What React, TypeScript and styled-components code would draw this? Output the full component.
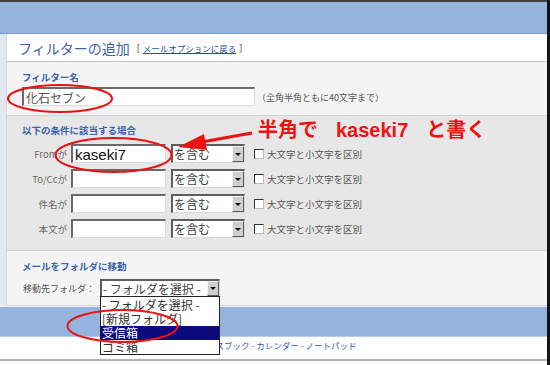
import { Fragment } from "react";
import styled, { createGlobalStyle } from "styled-components";

const GlobalStyle = createGlobalStyle`
  html, body {
    margin: 0;
    padding: 0;
    background: #ffffff;
  }
  body {
    font-family: "Noto Sans CJK JP", "Noto Sans", sans-serif;
  }
`;

const JP = `"Noto Sans CJK JP", "Noto Sans", sans-serif`;

const Page = styled.div`
  position: relative;
  width: 547px;
  height: 365px;
  overflow: hidden;
  border-right: 3px solid #141414;
  display: flex;
  flex-direction: column;
  background: #ffffff;
  font-family: ${JP};
`;

const Band = styled.div<{ $top?: boolean }>`
  flex: none;
  height: ${(p) => (p.$top ? "31px" : "29px")};
  background: #95b3df;
  border-top: ${(p) => (p.$top ? "2px solid #3e3e3e" : "1px solid #f4eeee")};
  border-bottom: 1px solid ${(p) => (p.$top ? "#7898cf" : "#b9cbe8")};
`;

const Body = styled.div`
  flex: none;
  display: flex;
  height: 272px;
`;

const SideStrip = styled.div`
  width: 6px;
  background: #e3e7ee;
  border-right: 1px solid #d5dae2;
`;

const Content = styled.div`
  flex: 1;
  display: flex;
  flex-direction: column;
`;

const TitleBar = styled.div`
  height: 27px;
  display: flex;
  align-items: center;
  gap: 7px;
  padding-left: 11px;
  background: #ffffff;
  border-bottom: 1px solid #c9c9c9;
`;

const Title = styled.h1`
  margin: 0;
  font-size: 14px;
  font-weight: 400;
  color: #3d63ae;
`;

const Bracket = styled.span`
  font-size: 9px;
  color: #333;
  display: flex;
  gap: 3px;
  align-items: center;
`;

const BackLink = styled.a`
  color: #2a4aa8;
  text-decoration: underline;
  font-size: 8.5px;
`;

const Section = styled.div<{ $tone: "light" | "dark"; $h: number }>`
  height: ${(p) => p.$h}px;
  box-sizing: border-box;
  padding: ${(p) => (p.$tone === "dark" ? "9px 0 0 15px" : "10px 0 0 15px")};
  background: ${(p) => (p.$tone === "dark" ? "#e7e7e7" : "#f4f4f4")};
  border-bottom: 1px solid #d2d2d2;
  display: flex;
  flex-direction: column;
  position: relative;
`;

const SectionLabel = styled.div<{ $gap: number }>`
  font-size: 9.5px;
  line-height: 10px;
  font-weight: 700;
  color: #3b63ae;
  margin-bottom: ${(p) => p.$gap}px;
`;

const NameRow = styled.div`
  display: flex;
  align-items: flex-end;
  gap: 2px;
`;

const Hint = styled.span`
  font-size: 9px;
  color: #555;
  padding-bottom: 2px;
`;

const TextBox = styled.input<{ $w: number; $big?: boolean }>`
  box-sizing: border-box;
  width: ${(p) => p.$w}px;
  height: 19px;
  margin: 0;
  padding: 0 2px;
  background: #ffffff;
  border-top: 2px solid #6a6a6a;
  border-left: 2px solid #6a6a6a;
  border-right: 1px solid #dcdcdc;
  border-bottom: 1px solid #dcdcdc;
  outline: none;
  font-family: ${(p) => (p.$big ? `"Liberation Sans", Arial, sans-serif` : JP)};
  font-size: ${(p) => (p.$big ? "15px" : "12px")};
  color: ${(p) => (p.$big ? "#111" : "#555")};
`;

const CondGrid = styled.div`
  display: grid;
  grid-template-columns: 44px 95px 74px auto;
  grid-auto-rows: 19px;
  column-gap: 5px;
  row-gap: 6px;
  align-items: center;
`;

const RowLabel = styled.span`
  justify-self: end;
  font-size: 9.5px;
  color: #666;
  margin-right: -1px;
`;

const Select = styled.div<{ $w: number; $h: number; $size: number }>`
  box-sizing: border-box;
  width: ${(p) => p.$w}px;
  height: ${(p) => p.$h}px;
  display: flex;
  align-items: stretch;
  background: #ffffff;
  border-top: 2px solid #5e5e5e;
  border-left: 2px solid #5e5e5e;
  border-right: 1px solid #d8d8d8;
  border-bottom: 1px solid #d8d8d8;
  font-size: ${(p) => p.$size}px;
  color: #444;
`;

const SelectText = styled.span`
  flex: 1;
  line-height: 1;
  display: flex;
  align-items: center;
  padding-left: 1px;
  white-space: nowrap;
  overflow: hidden;
`;

const ArrowBox = styled.span`
  width: 12px;
  box-sizing: border-box;
  background: #cfcfcf;
  border-top: 1px solid #f2f2f2;
  border-left: 1px solid #f2f2f2;
  border-right: 1px solid #5a5a5a;
  border-bottom: 1px solid #5a5a5a;
  display: flex;
  align-items: center;
  justify-content: center;
  &::after {
    content: "";
    border-left: 3px solid transparent;
    border-right: 3px solid transparent;
    border-top: 3px solid #111;
  }
`;

const CheckLabel = styled.label`
  display: flex;
  align-items: center;
  gap: 3px;
  margin-left: 4px;
  font-size: 9.5px;
  color: #555;
`;

const Box = styled.span`
  width: 10px;
  height: 10px;
  box-sizing: border-box;
  background: #fff;
  border-top: 1px solid #333;
  border-left: 1px solid #333;
  border-right: 1px solid #bbb;
  border-bottom: 1px solid #bbb;
`;

const FolderRow = styled.div`
  display: flex;
  align-items: center;
  gap: 5px;
  padding-left: 1px;
`;

const FolderLabel = styled.span`
  font-size: 9px;
  color: #555;
`;

const SelectWrap = styled.div`
  position: relative;
`;

const OptionList = styled.ul`
  position: absolute;
  top: 17px;
  left: 0;
  z-index: 5;
  width: 120px;
  box-sizing: border-box;
  margin: 0;
  padding: 1px 0 0;
  list-style: none;
  background: #ffffff;
  border: 1px solid #222;
`;

const OptionItem = styled.li<{ $active?: boolean }>`
  height: 14px;
  line-height: 14px;
  padding-left: 1px;
  font-size: 12px;
  white-space: nowrap;
  color: ${(p) => (p.$active ? "#ffffff" : "#333")};
  background: ${(p) => (p.$active ? "#0b0b7e" : "transparent")};
`;

const Footer = styled.div`
  flex: none;
  height: 24px;
  border-bottom: 2px solid #b4b4b4;
  padding-left: 190px;
  padding-top: 2px;
  box-sizing: border-box;
  font-size: 8.5px;
  color: #3557b4;
`;

const Overlay = styled.svg`
  position: absolute;
  left: 0;
  top: 0;
  z-index: 10;
  pointer-events: none;
`;

const Callout = styled.div`
  position: absolute;
  left: 258px;
  top: 118px;
  z-index: 10;
  display: flex;
  gap: 18px;
  font-family: "Liberation Sans", "Noto Sans CJK JP", sans-serif;
  font-size: 20px;
  font-weight: 700;
  line-height: 24px;
  color: #ee1111;
`;

const conditions = [
  { label: "Fromが", value: "kaseki7" },
  { label: "To/Ccが", value: "" },
  { label: "件名が", value: "" },
  { label: "本文が", value: "" },
];

const folders = ["- フォルダを選択 -", "[新規フォルダ]", "受信箱", "ゴミ箱"];

export default function App() {
  return (
    <>
      <GlobalStyle />
      <Page>
        <Band $top />
        <Body>
          <SideStrip />
          <Content>
            <TitleBar>
              <Title>フィルターの追加</Title>
              <Bracket>
                [<BackLink>メールオプションに戻る</BackLink>]
              </Bracket>
            </TitleBar>

            <Section $tone="light" $h={54}>
              <SectionLabel $gap={5}>フィルター名</SectionLabel>
              <NameRow>
                <TextBox $w={233} defaultValue="化石セブン" readOnly />
                <Hint>（全角半角ともに40文字まで）</Hint>
              </NameRow>
            </Section>

            <Section $tone="dark" $h={135}>
              <SectionLabel $gap={9}>以下の条件に該当する場合</SectionLabel>
              <CondGrid>
                {conditions.map((c) => (
                  <Fragment key={c.label}>
                    <RowLabel>{c.label}</RowLabel>
                    <TextBox $w={95} $big defaultValue={c.value} readOnly />
                    <Select $w={74} $h={19} $size={12}>
                      <SelectText>を含む</SelectText>
                      <ArrowBox />
                    </Select>
                    <CheckLabel>
                      <Box />
                      大文字と小文字を区別
                    </CheckLabel>
                  </Fragment>
                ))}
              </CondGrid>
            </Section>

            <Section $tone="light" $h={55}>
              <SectionLabel $gap={8}>メールをフォルダに移動</SectionLabel>
              <FolderRow>
                <FolderLabel>移動先フォルダ：</FolderLabel>
                <SelectWrap>
                  <Select $w={120} $h={18} $size={12}>
                    <SelectText>- フォルダを選択 -</SelectText>
                    <ArrowBox />
                  </Select>
                  <OptionList>
                    {folders.map((f) => (
                      <OptionItem key={f} $active={f === "受信箱"}>
                        {f}
                      </OptionItem>
                    ))}
                  </OptionList>
                </SelectWrap>
              </FolderRow>
            </Section>
          </Content>
        </Body>
        <Band />
        <Footer>アドレスブック - カレンダー - ノートパッド</Footer>

        <Overlay width="550" height="365" viewBox="0 0 550 365">
          <g fill="none" stroke="#ee1111" strokeWidth="2">
            <ellipse cx="60" cy="98.5" rx="52" ry="13.5" />
            <ellipse cx="113.5" cy="155" rx="58" ry="17" />
            <ellipse cx="122.5" cy="326" rx="55" ry="16" />
          </g>
          <line x1="196" y1="143" x2="252" y2="133" stroke="#ee1111" strokeWidth="3" />
          <polygon points="178,147 204,134 207,150" fill="#ee1111" />
        </Overlay>
        <Callout>
          <span>半角で</span>
          <span>kaseki7</span>
          <span>と書く</span>
        </Callout>
      </Page>
    </>
  );
}
